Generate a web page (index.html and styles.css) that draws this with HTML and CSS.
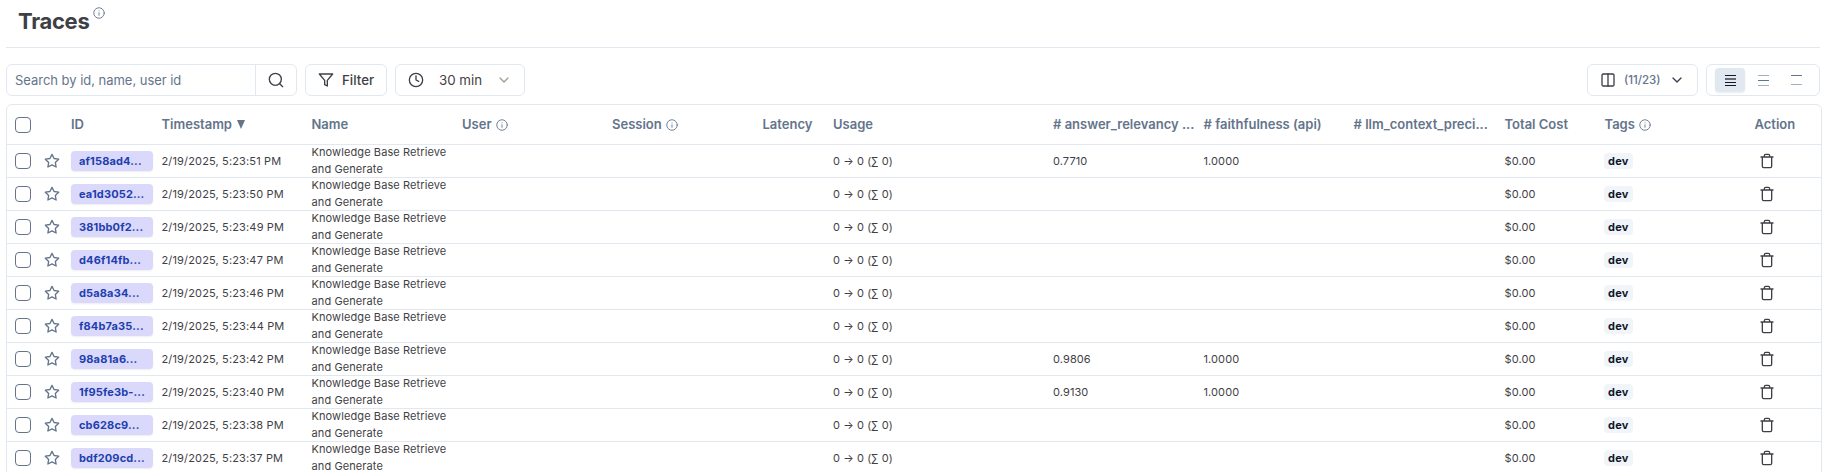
FILE: index.html
```html
<!DOCTYPE html>
<html lang="en">
<head>
<meta charset="utf-8">
<title>Traces</title>
<link rel="stylesheet" href="styles.css">
</head>
<body>
<svg class="sprite" aria-hidden="true">
  <symbol id="info" viewBox="0 0 24 24"><circle cx="12" cy="12" r="10.5"/><path d="M12 16.5v-5M12 7.5h.01"/></symbol>
  <symbol id="search" viewBox="0 0 24 24"><circle cx="11" cy="11" r="9"/><path d="m22 22-4.7-4.7"/></symbol>
  <symbol id="filter" viewBox="0 0 24 24"><path d="M22 3H2l8 9.46V19l4 2v-8.54z"/></symbol>
  <symbol id="clock" viewBox="0 0 24 24"><circle cx="12" cy="12" r="10"/><path d="M12 6v6l4 2"/></symbol>
  <symbol id="chevron" viewBox="0 0 24 24"><path d="m6 9 6 6 6-6"/></symbol>
  <symbol id="columns" viewBox="0 0 24 24"><rect x="3" y="3" width="18" height="18" rx="2"/><path d="M12 3v18"/></symbol>
  <symbol id="star" viewBox="0 0 24 24"><path d="m12 2 3.09 6.26L22 9.27l-5 4.87 1.18 6.88L12 17.77l-6.18 3.25L7 14.14 2 9.27l6.91-1.01z"/></symbol>
  <symbol id="trash" viewBox="0 0 24 24"><path d="M3 6h18M19 6v14a2 2 0 0 1-2 2H7a2 2 0 0 1-2-2V6M8 6V4a2 2 0 0 1 2-2h4a2 2 0 0 1 2 2v2"/></symbol>
</svg>
<header class="page-head">
  <h1 class="title">Traces</h1>
  <svg class="icon info title-info"><use href="#info"/></svg>
</header>
<div class="toolbar">
  <div class="search box">
    <span class="search-text">Search by id, name, user id</span>
    <span class="search-btn"><svg class="icon icon-16"><use href="#search"/></svg></span>
  </div>
  <div class="filter box"><svg class="icon icon-16"><use href="#filter"/></svg><span class="label">Filter</span></div>
  <div class="range box"><svg class="icon icon-16"><use href="#clock"/></svg><span class="label range-text">30 min</span><svg class="icon icon-16 faded"><use href="#chevron"/></svg></div>
  <div class="columns box"><svg class="icon icon-16"><use href="#columns"/></svg><span class="count">(11/23)</span><svg class="icon icon-16"><use href="#chevron"/></svg></div>
  <div class="density box">
    <span class="density-item active"><i></i><i class="thick"></i><i></i><i></i></span>
    <span class="density-item mid"><i></i><i class="dark"></i><i></i></span>
    <span class="density-item low"><i class="dark"></i><i></i></span>
  </div>
</div>
<main class="table">
  <div class="row head">
    <div class="cell"><span class="check"></span></div>
    <div class="cell"></div>
    <div class="cell"><span>ID</span></div>
    <div class="cell"><span>Timestamp</span><span class="sort"></span></div>
    <div class="cell"><span>Name</span></div>
    <div class="cell"><span>User</span><svg class="icon info"><use href="#info"/></svg></div>
    <div class="cell"><span>Session</span><svg class="icon info"><use href="#info"/></svg></div>
    <div class="cell"><span>Latency</span></div>
    <div class="cell"><span>Usage</span></div>
    <div class="cell"><span># answer_relevancy ...</span></div>
    <div class="cell"><span># faithfulness (api)</span></div>
    <div class="cell"><span># llm_context_preci...</span></div>
    <div class="cell"><span>Total Cost</span></div>
    <div class="cell"><span>Tags</span><svg class="icon info"><use href="#info"/></svg></div>
    <div class="cell"><span>Action</span></div>
  </div>
  <div id="rows"></div>
</main>
<script src="app.js"></script>
</body>
</html>
```
FILE: styles.css
```css
* { box-sizing: border-box; }
body { margin: 0; height: 472px; overflow: hidden; background: #fff; color: #3f3f46; font-family: Inter, sans-serif; }
.sprite { position: absolute; width: 0; height: 0; }
.icon { flex: none; fill: none; stroke: currentColor; stroke-width: 2; stroke-linecap: round; stroke-linejoin: round; }
.icon-16 { width: 16px; height: 16px; }
.info { width: 12px; height: 12px; color: #64748b; stroke-width: 1.8; }
.page-head { display: flex; height: 48px; margin: 0 8px 0 6px; padding-left: 12px; border-bottom: 1px solid #e2e8f0; }
.title { margin: 7px 0 0; font-size: 22px; line-height: 28px; font-weight: 700; letter-spacing: -0.3px; }
.title-info { margin: 7px 0 0 4px; }
.toolbar { display: flex; gap: 8px; height: 32px; margin: 16px 8px 8px 6px; font-size: 13.3px; }
.box { display: flex; align-items: center; border: 1px solid #e2e8f0; border-radius: 6px; height: 32px; }
.search { width: 291px; color: #64748b; }
.search-text { flex: 1; padding-left: 8px; font-size: 13px; letter-spacing: -0.03px; }
.search-btn { display: flex; align-items: center; justify-content: center; width: 41px; height: 30px; border-left: 1px solid #e2e8f0; color: #3f3f46; }
.label { padding-bottom: 1px; }
.filter { width: 82px; padding-left: 12px; gap: 8px; font-weight: 500; }
.range { width: 130px; padding: 0 12px; }
.range-text { flex: 1; padding-left: 15px; }
.faded { opacity: .5; }
.columns { margin-left: auto; width: 111px; padding: 0 12px; gap: 8px; }
.count { flex: 1; font-size: 11.5px; font-weight: 500; color: #64748b; }
.density { width: 114px; padding: 0 8px; gap: 3px; }
.density-item { display: flex; flex-direction: column; align-items: center; justify-content: center; width: 30px; height: 24px; border-radius: 4px; gap: 4px; color: #a3b0c2; }
.density-item i { width: 11px; height: 1px; background: currentColor; }
.density-item .dark { background: #64748b; }
.density-item.active { background: #e2e8f0; color: #0f172a; gap: 2px; box-shadow: 0 1px 2px rgba(0,0,0,.08); }
.density-item .thick { height: 2px; opacity: .6; }
.density-item.low { gap: 8px; }
.table { margin: 0 6px; border: 1px solid #e2e8f0; border-radius: 6px 6px 0 0; height: 380px; }
.row { display: grid; grid-template-rows: 100%; grid-template-columns: 34px 26px 90.5px 150px 150.5px 150px 150.5px 70.5px 220px 150.5px 150px 151px 100px 150px 1fr; height: 33px; border-bottom: 1px solid #e2e8f0; font-size: 11px; letter-spacing: 0.1px; }
.head { height: 40px; color: #64748b; font-size: 13px; letter-spacing: 0; font-weight: 600; }
.cell { display: flex; align-items: center; min-width: 0; padding-left: 4px; white-space: nowrap; }
.cell:first-child { padding-left: 8px; }
.head .cell > span:not([class]) { padding-bottom: 1px; }
.head .info { margin-left: 4px; }
.sort { margin-left: 5px; border: 4.5px solid transparent; border-top: 9px solid #64748b; border-bottom: 0; }
.check { width: 16px; height: 16px; border: 1px solid #64748b; border-radius: 4px; }
.name { line-height: 17px; }
.time { letter-spacing: 0.15px; }
.id { width: 82px; height: 20px; padding-left: 8px; border-radius: 4px; background: #dbd9fb; color: #1e40af; font-weight: 700; line-height: 20px; letter-spacing: 0.15px; box-shadow: 0 1px 2px rgba(0,0,0,.07); }
.star { width: 16px; height: 16px; margin-left: -1px; color: #64748b; }
.tag { margin-left: -1px; padding: 0 4.5px; height: 16px; line-height: 16px; border-radius: 4px; background: #f1f5f9; color: #0f172a; font-weight: 700; letter-spacing: 0.2px; }
.trash { margin-left: 4px; }
```
FILE: app.js
```js
const traces = [
  ["af158ad4...", "51", "0.7710", "1.0000"],
  ["ea1d3052...", "50"],
  ["381bb0f2...", "49"],
  ["d46f14fb...", "47"],
  ["d5a8a34...", "46"],
  ["f84b7a35...", "44"],
  ["98a81a6...", "42", "0.9806", "1.0000"],
  ["1f95fe3b-...", "40", "0.9130", "1.0000"],
  ["cb628c9...", "38"],
  ["bdf209cd...", "37"],
];

const icon = (name, cls) => `<svg class="icon ${cls}"><use href="#${name}"/></svg>`;
const text = (value) => `<span>${value}</span>`;

document.getElementById("rows").innerHTML = traces.map(([id, sec, relevancy = "", faith = ""]) => {
  const cells = [
    '<span class="check"></span>',
    icon("star", "star"),
    `<span class="id">${id}</span>`,
    `<span class="time">2/19/2025, 5:23:${sec} PM</span>`,
    '<span class="name">Knowledge Base Retrieve<br>and Generate</span>',
    "", "", "",
    text("0 → 0 (∑ 0)"),
    text(relevancy), text(faith), "",
    text("$0.00"),
    '<span class="tag">dev</span>',
    icon("trash", "icon-16 trash"),
  ];
  return `<div class="row">${cells.map(c => `<div class="cell">${c}</div>`).join("")}</div>`;
}).join("");
```
